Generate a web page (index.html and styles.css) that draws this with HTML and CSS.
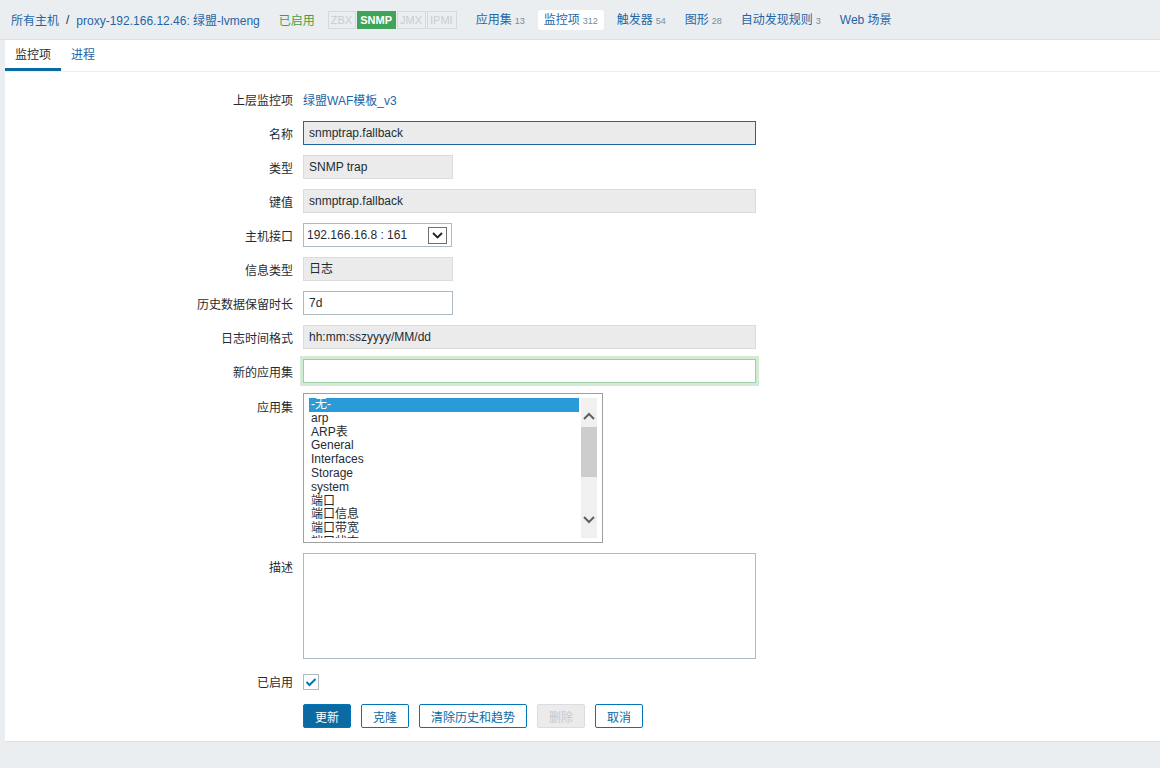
FILE: index.html
```html
<!DOCTYPE html>
<html>
<head>
<meta charset="utf-8">
<link rel="stylesheet" href="styles.css">
</head>
<body>
<header class="topbar">
  <nav class="crumbs">
    <a class="link">所有主机</a>
    <span class="sep">/</span>
    <a class="link">proxy-192.166.12.46: 绿盟-lvmeng</a>
  </nav>
  <span class="status-on">已启用</span>
  <span class="tags">
    <span class="tag">ZBX</span><span class="tag tag-on">SNMP</span><span class="tag">JMX</span><span class="tag">IPMI</span>
  </span>
  <nav class="hostnav">
    <a class="hn">应用集<sup>13</sup></a>
    <a class="hn hn-active">监控项<sup>312</sup></a>
    <a class="hn">触发器<sup>54</sup></a>
    <a class="hn">图形<sup>28</sup></a>
    <a class="hn">自动发现规则<sup>3</sup></a>
    <a class="hn">Web 场景</a>
  </nav>
</header>

<main class="panel">
  <div class="tabs">
    <span class="tab tab-active">监控项</span>
    <span class="tab">进程</span>
  </div>

  <form class="form">
    <div class="row">
      <label class="lbl">上层监控项</label>
      <div class="field"><a class="link">绿盟WAF模板_v3</a></div>
    </div>
    <div class="row">
      <label class="lbl">名称</label>
      <div class="field"><div class="inp ro wide focus">snmptrap.fallback</div></div>
    </div>
    <div class="row">
      <label class="lbl">类型</label>
      <div class="field"><div class="inp ro narrow">SNMP trap</div></div>
    </div>
    <div class="row">
      <label class="lbl">键值</label>
      <div class="field"><div class="inp ro wide">snmptrap.fallback</div></div>
    </div>
    <div class="row">
      <label class="lbl">主机接口</label>
      <div class="field">
        <div class="sel">
          <span>192.166.16.8 : 161</span>
          <span class="sel-btn"><svg width="11" height="7" viewBox="0 0 11 7"><path d="M1 1 L5.5 5.5 L10 1" fill="none" stroke="#222" stroke-width="1.8"/></svg></span>
        </div>
      </div>
    </div>
    <div class="row">
      <label class="lbl">信息类型</label>
      <div class="field"><div class="inp ro narrow">日志</div></div>
    </div>
    <div class="row">
      <label class="lbl">历史数据保留时长</label>
      <div class="field"><div class="inp narrow">7d</div></div>
    </div>
    <div class="row">
      <label class="lbl">日志时间格式</label>
      <div class="field"><div class="inp ro wide">hh:mm:sszyyyy/MM/dd</div></div>
    </div>
    <div class="row">
      <label class="lbl">新的应用集</label>
      <div class="field"><div class="inp wide glow"></div></div>
    </div>
    <div class="row row-top">
      <label class="lbl">应用集</label>
      <div class="field">
        <div class="listbox">
          <div class="items">
            <div class="opt opt-sel">-无-</div>
            <div class="opt">arp</div>
            <div class="opt">ARP表</div>
            <div class="opt">General</div>
            <div class="opt">Interfaces</div>
            <div class="opt">Storage</div>
            <div class="opt">system</div>
            <div class="opt">端口</div>
            <div class="opt">端口信息</div>
            <div class="opt">端口带宽</div>
            <div class="opt">端口状态</div>
          </div>
          <div class="sbar">
            <svg class="arr" width="14" height="10" viewBox="0 0 14 10"><path d="M2 8 L7 3 L12 8" fill="none" stroke="#606060" stroke-width="2"/></svg>
            <div class="thumb"></div>
            <div class="track"></div>
            <svg class="arr" width="14" height="10" viewBox="0 0 14 10"><path d="M2 2 L7 7 L12 2" fill="none" stroke="#606060" stroke-width="2"/></svg>
          </div>
        </div>
      </div>
    </div>
    <div class="row row-top">
      <label class="lbl">描述</label>
      <div class="field"><div class="textarea"></div></div>
    </div>
    <div class="row">
      <label class="lbl">已启用</label>
      <div class="field">
        <span class="chk"><svg width="12" height="10" viewBox="0 0 12 10"><path d="M1.5 5 L4.5 8 L10.5 2" fill="none" stroke="#0275b8" stroke-width="2"/></svg></span>
      </div>
    </div>
    <div class="row">
      <span class="lbl"></span>
      <div class="field buttons">
        <button type="button" class="btn btn-main">更新</button>
        <button type="button" class="btn">克隆</button>
        <button type="button" class="btn">清除历史和趋势</button>
        <button type="button" class="btn btn-off">删除</button>
        <button type="button" class="btn">取消</button>
      </div>
    </div>
  </form>
</main>
</body>
</html>
```
FILE: styles.css
```css
* { box-sizing: border-box; }
html, body { margin: 0; padding: 0; }
body {
  background: #ebeef0;
  font-family: "Liberation Sans", Arial, "Noto Sans CJK SC", sans-serif;
  font-size: 12px;
  color: #1f2c33;
  width: 1160px;
  height: 768px;
  overflow: hidden;
}
.link { color: #1f65a6; text-decoration: none; }

.topbar {
  height: 40px;
  display: flex;
  align-items: center;
  padding-left: 11px;
  border-bottom: 1px solid #dce0e3;
  background: #ebeef0;
}
.crumbs { display: flex; align-items: center; }
.sep { margin: 0 7px; color: #1f2c33; }
.status-on { color: #429e47; margin-left: 19px; }
.tags { display: flex; margin-left: 13px; }
.tag {
  height: 18px;
  line-height: 16px;
  padding: 0 3px 0 2px;
  border: 1px solid #d4d9dc;
  color: #c7cdd1;
  font-size: 11px;
  margin-right: 1px;
}
.tag-on { background: #3fa45a; border-color: #3fa45a; color: #fff; font-weight: bold; }
.hostnav { display: flex; align-items: center; margin-left: 12px; }
.hn {
  color: #1f65a6;
  padding: 3px 6px;
  border-radius: 3px;
  height: 20px;
  line-height: 14px;
  margin-right: 1px;
}
.hn + .hn { margin-left: 6px; }
.hn sup {
  font-size: 9px;
  color: #768d99;
  vertical-align: baseline;
  margin-left: 3px;
}
.hn-active { background: #fff; }

.panel {
  margin-left: 5px;
  background: #fff;
  height: 702px;
  border-bottom: 1px solid #dce0e3;
}
.tabs {
  display: flex;
  height: 32px;
  border-bottom: 1px solid #ebeef0;
}
.tab {
  padding: 0 10px;
  line-height: 30px;
  color: #1f65a6;
}
.tab-active {
  color: #1f2c33;
  border-bottom: 3px solid #0a6aa1;
}

.form { padding-top: 15px; }
.row {
  display: grid;
  grid-template-columns: 288px 1fr;
  column-gap: 10px;
  align-items: center;
  min-height: 24px;
  margin-bottom: 10px;
}
.row-top { align-items: start; }
.row-top .lbl { padding-top: 5px; }
.lbl { text-align: right; color: #1f2c33; }
.field { display: flex; align-items: center; }

.inp {
  height: 24px;
  border: 1px solid #acbbc2;
  background: #fff;
  padding: 0 5px;
  line-height: 22px;
  color: #1f2c33;
}
.ro { background: #ebebeb; border-color: #dcdcdc; }
.wide { width: 453px; }
.narrow { width: 150px; }
.focus { border-color: #1f65a6; }
.glow { box-shadow: 0 0 0 3px #d3ead5; border-color: #9fcfa6; }

.sel {
  width: 149px;
  height: 24px;
  border: 1px solid #acbbc2;
  display: flex;
  align-items: center;
  justify-content: space-between;
  padding: 0 4px 0 3px;
}
.sel-btn {
  width: 19px;
  height: 17px;
  border: 1px solid #707070;
  display: flex;
  align-items: center;
  justify-content: center;
  background: #fff;
}

.listbox {
  width: 300px;
  height: 150px;
  border: 1px solid #a0a0a0;
  display: flex;
  padding: 4px 5px 4px 5px;
  overflow: hidden;
}
.items { flex: 1; overflow: hidden; }
.opt { height: 13.8px; line-height: 13.8px; padding-left: 2px; white-space: nowrap; }
.opt-sel { background: #2b9ad8; color: #fff; margin-right: 1px; }
.sbar {
  width: 16px;
  background: #f0f0f0;
  display: flex;
  flex-direction: column;
  align-items: center;
  margin-left: 1px;
}
.arr { margin: 13px 0 6px; flex: none; }
.sbar .arr:last-child { margin: 6px 0 13px; }
.thumb { width: 16px; height: 50px; background: #cdcdcd; flex: none; }
.track { flex: 1; }

.textarea {
  width: 453px;
  height: 106px;
  border: 1px solid #acbbc2;
}

.chk {
  width: 16px;
  height: 16px;
  border: 1px solid #acbbc2;
  display: flex;
  align-items: center;
  justify-content: center;
  margin-top: 1px;
}

.buttons { gap: 10px; padding-top: 1px; }
.btn {
  height: 24px;
  padding: 0 11px;
  border: 1px solid #0275b8;
  background: #fff;
  color: #0a6aa1;
  font-family: "Liberation Sans", Arial, "Noto Sans CJK SC", sans-serif;
  font-size: 12px;
  border-radius: 2px;
  min-width: 48px;
}
.btn-main { background: #0a6aa1; color: #fff; }
.btn-off { background: #ebebeb; border-color: #dcdcdc; color: #c8c8c8; }
```
